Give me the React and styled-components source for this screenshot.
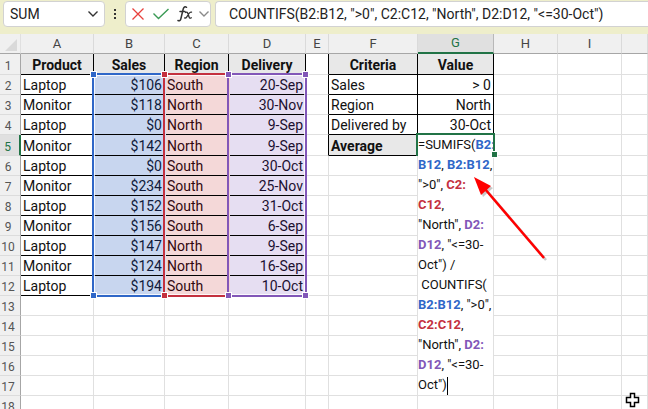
import React from "react";
import styled, { createGlobalStyle, css } from "styled-components";

const GlobalStyle = createGlobalStyle`
  *, *::before, *::after { box-sizing: border-box; }
  html, body { margin: 0; background: #fff; }
  body { font-family: Roboto, "Liberation Sans", sans-serif; font-size: 14px; color: #111; }
`;

const colors = {
  bar: "#eeeecb",
  head: "#f0f0f0",
  headActive: "#e0e0e0",
  line: "#e0e0e0",
  axis: "#a6a6a6",
  green: "#217346",
  blue: "#2f67c8",
  red: "#c4313f",
  purple: "#8257b8",
};

const fills = { blue: "#c8d6ef", red: "#f4d8d8", purple: "#e6def2" };
const inks = { blue: "#101c3c", red: "#32090f", purple: "#1c1030" };

const columnTracks = [21, 73, 71, 64, 77, 23, 89, 76, 64, 64];
const letters = ["A", "B", "C", "D", "E", "F", "G", "H", "I", ""];
const rowHeight = (n) => (n === 1 || n === 5 ? 21 : 20);
const rowNumbers = Array.from({ length: 18 }, (_, i) => i + 1);
const gridColumns = `${columnTracks.map((w) => `${w}px`).join(" ")} 1fr`;
const gridRows = `20px ${rowNumbers.map((n) => `${rowHeight(n)}px`).join(" ")}`;

const Page = styled.main`
  height: 100vh;
  overflow: hidden;
  display: flex;
  flex-direction: column;
`;

const Toolbar = styled.header`
  flex: none;
  display: flex;
  align-items: center;
  height: 34px;
  padding: 1px 0 7px 3px;
  background: ${colors.bar};
`;

const barBox = css`
  display: flex;
  align-items: center;
  height: 26px;
  background: #fff;
  border: 1px solid #d2d2d2;
  border-radius: 4px;
`;

const NameBox = styled.div`
  ${barBox}
  width: 102px;
  padding: 0 5px 0 6px;
`;

const BarInput = styled.input`
  flex: 1;
  min-width: 0;
  border: 0;
  padding: 0;
  outline: 0;
  background: transparent;
  font: inherit;
  color: #222;
`;

const IconButton = styled.button`
  display: flex;
  align-items: center;
  justify-content: center;
  border: 0;
  padding: 0;
  background: transparent;
  width: ${(p) => p.$width}px;
  height: 24px;
`;

const Grip = styled.svg`
  flex: none;
  width: 20px;
  height: 12px;
`;

const Actions = styled.div`
  ${barBox}
  width: 86px;
  justify-content: space-between;
  padding: 0 0 0 4px;
`;

const FormulaBox = styled.div`
  ${barBox}
  flex: 1;
  margin-left: 4px;
  padding-left: 13px;
  border-right: 0;
  border-radius: 4px 0 0 4px;
`;

const Sheet = styled.section`
  position: relative;
  flex: none;
`;

const Table = styled.table`
  width: 100%;
  table-layout: fixed;
  border-collapse: separate;
  border-spacing: 0;
`;

const Col = styled.col`
  width: ${(p) => (p.$width ? `${p.$width}px` : "auto")};
`;

const Row = styled.tr`
  height: ${(p) => p.$height}px;
`;

const Corner = styled.td`
  padding: 0;
  background: ${colors.head};
  border-right: 1px solid ${colors.line};
  border-bottom: 1px solid ${colors.axis};
  vertical-align: bottom;
`;

const CornerMark = styled.svg`
  display: block;
  margin: 0 0 2px 5px;
  width: 12px;
  height: 12px;
`;

const ColumnHead = styled.th`
  padding: 0;
  height: 20px;
  font-size: 13px;
  font-weight: 400;
  line-height: 18px;
  color: ${(p) => (p.$active ? colors.green : "#444")};
  background: ${(p) => (p.$active ? colors.headActive : colors.head)};
  border-right: 1px solid ${(p) => (p.$active ? "#b8b8b8" : "#dadada")};
  border-bottom: ${(p) => (p.$active ? `2px solid ${colors.green}` : `1px solid ${colors.axis}`)};
`;

const RowHead = styled.th`
  padding: 3px 4px 0 0;
  font-size: 12px;
  font-weight: 400;
  line-height: 16px;
  color: ${(p) => (p.$active ? colors.green : "#555")};
  background: ${(p) => (p.$active ? colors.headActive : colors.head)};
  border-bottom: 1px solid #dcdcdc;
  border-right: ${(p) => (p.$active ? `2px solid ${colors.green}` : `1px solid ${colors.axis}`)};
`;

const Cell = styled.td`
  padding: 2px 2px 0;
  line-height: 17px;
  white-space: nowrap;
  text-align: ${(p) => p.$align};
  font-weight: ${(p) => (p.$bold ? 700 : 400)};
  color: ${(p) => (p.$tint ? inks[p.$tint] : "#111")};
  background: ${(p) => (p.$tint ? fills[p.$tint] : p.$bold ? "#e8e8e8" : "#fff")};
  border-right: 1px solid ${(p) => (p.$rightInk ? "#000" : colors.line)};
  border-bottom: 1px solid ${(p) => (p.$bottomInk ? "#000" : colors.line)};
`;

const Overlay = styled.div`
  position: absolute;
  inset: 0;
  display: grid;
  grid-template-columns: ${gridColumns};
  grid-template-rows: ${gridRows};
  pointer-events: none;
`;

const Range = styled.div`
  position: relative;
  grid-column: ${(p) => p.$column};
  grid-row: 3 / 14;
  margin: -2px -1px -1px -2px;
  border: 2px solid ${(p) => colors[p.$tint]};
  box-shadow: inset 0 0 0 1px rgba(255, 255, 255, 0.8);
`;

const Handle = styled.span`
  position: absolute;
  ${(p) => p.$v}: -3px;
  ${(p) => p.$h}: -3px;
  width: 5px;
  height: 5px;
  background: ${(p) => colors[p.$tint]};
  box-shadow: 0 0 0 1px #fff;
`;

const ActiveCell = styled.div`
  position: relative;
  grid-column: 8;
  grid-row: 6;
  margin: -2px -1px 0 -2px;
  border: 2px solid ${colors.green};
  border-bottom: 0;
`;

const FillHandle = styled.span`
  position: absolute;
  right: -4px;
  bottom: -1px;
  width: 5px;
  height: 5px;
  background: ${colors.green};
  box-shadow: 0 0 0 1px #fff;
`;

const Editor = styled.div`
  grid-column: 8;
  grid-row: 6 / 19;
  align-self: start;
  margin-right: 1px;
  background: #fff;
  outline: 0;
  font-size: 13px;
  line-height: 20px;
  white-space: pre;
  pointer-events: auto;
`;

const Ref = styled.b`
  color: ${(p) => colors[p.$tint]};
`;

const Caret = styled.span`
  display: inline-block;
  width: 1px;
  height: 18px;
  vertical-align: middle;
  background: #000;
`;

const Arrow = styled.svg`
  position: absolute;
  left: 468px;
  top: 138px;
  width: 84px;
  height: 92px;
  pointer-events: none;
`;

const Pointer = styled.svg`
  position: absolute;
  left: 625px;
  top: 358px;
  width: 16px;
  height: 17px;
  pointer-events: none;
`;

const sales = [
  ["Laptop", "$106", "South", "20-Sep"],
  ["Monitor", "$118", "North", "30-Nov"],
  ["Laptop", "$0", "North", "9-Sep"],
  ["Monitor", "$142", "North", "9-Sep"],
  ["Laptop", "$0", "South", "30-Oct"],
  ["Monitor", "$234", "South", "25-Nov"],
  ["Laptop", "$152", "South", "31-Oct"],
  ["Monitor", "$156", "South", "6-Sep"],
  ["Laptop", "$147", "North", "9-Sep"],
  ["Monitor", "$124", "North", "16-Sep"],
  ["Laptop", "$194", "South", "10-Oct"],
];
const orders = [["Product", "Sales", "Region", "Delivery"], ...sales];
const criteria = [
  ["Criteria", "Value"],
  ["Sales", "> 0"],
  ["Region", "North"],
  ["Delivered by", "30-Oct"],
  ["Average", ""],
];
const tints = [null, "blue", "red", "purple"];

function cellProps(row, col) {
  const inOrders = row <= 12 && col <= 3;
  const inCriteria = row <= 5 && (col === 5 || col === 6);
  const text = inOrders ? orders[row - 1][col] : inCriteria ? criteria[row - 1][col - 5] : "";
  const right = col === 1 || col === 3 || col === 6;
  return {
    children: text,
    $align: row === 1 ? "center" : right ? "right" : "left",
    $bold: (row === 1 && (inOrders || inCriteria)) || (row === 5 && col === 5),
    $tint: inOrders && row > 1 ? tints[col] : null,
    $rightInk: inOrders || (row <= 5 && col >= 4 && col <= 6),
    $bottomInk: inOrders || inCriteria,
  };
}

const formula = [
  ["=SUMIFS(", ["blue", "B2:"]],
  [["blue", "B12"], ", ", ["blue", "B2:B12"], ","],
  ['">0", ', ["red", "C2:"]],
  [["red", "C12"], ","],
  ['"North", ', ["purple", "D2:"]],
  [["purple", "D12"], ', "<=30-'],
  ['Oct") /'],
  [" COUNTIFS("],
  [["blue", "B2:B12"], ', ">0",'],
  [["red", "C2:C12"], ","],
  ['"North", ', ["purple", "D2:"]],
  [["purple", "D12"], ', "<=30-'],
  ['Oct")'],
];

function RangeOutline({ tint, column }) {
  return (
    <Range $tint={tint} $column={column}>
      {["top", "bottom"].map((v) =>
        ["left", "right"].map((h) => <Handle key={v + h} $v={v} $h={h} $tint={tint} />)
      )}
    </Range>
  );
}

function Chevron({ color }) {
  return (
    <svg width="12" height="8" viewBox="0 0 12 8" fill="none" stroke={color} strokeWidth="1.4">
      <path d="M1.5 1.5 6 6l4.5-4.5" />
    </svg>
  );
}

function FormulaBar() {
  return (
    <Toolbar>
      <NameBox>
        <BarInput aria-label="Name box" defaultValue="SUM" />
        <IconButton $width={12} aria-label="Open name list">
          <Chevron color="#333" />
        </IconButton>
      </NameBox>
      <Grip viewBox="0 0 20 12" fill="#333" aria-hidden="true">
        <path d="M9 1h2v2H9zM9 5h2v2H9zM9 9h2v2H9z" />
      </Grip>
      <Actions>
        <IconButton $width={16} aria-label="Cancel">
          <svg width="14" height="14" viewBox="0 0 14 14" fill="none" stroke="#e8403c" strokeWidth="1.3">
            <path d="m1.5 1.5 11 11M12.5 1.5l-11 11" />
          </svg>
        </IconButton>
        <IconButton $width={24} aria-label="Enter">
          <svg width="18" height="12" viewBox="0 0 18 12" fill="none" stroke="#3a9a55" strokeWidth="1.4">
            <path d="m1.500 5.500 5 5 10-9.500" />
          </svg>
        </IconButton>
        <IconButton $width={18} aria-label="Insert function">
          <svg width="17" height="18" viewBox="0 0 17 18" fill="none" stroke="#333" strokeWidth="1.3" strokeLinecap="round">
            <path d="M9.500 2.300C8 1.200 6.800 2 6.200 4L3.800 14c-.4 1.700-1.500 2.300-2.800 1.500M3 6.500h5" strokeWidth="1.5" />
            <path d="M8.500 7.500c1.500-.8 2.100-.1 2.600 1.500l.9 2.700c.5 1.500 1.100 1.900 2.300 1.100M14.500 7.200c-1-.4-1.700.1-2.500 1.300l-2.200 3.300c-.7 1.100-1.300 1.500-2.200 1.100" />
          </svg>
        </IconButton>
        <IconButton $width={12} aria-label="More functions">
          <Chevron color="#8a8a8a" />
        </IconButton>
      </Actions>
      <FormulaBox>
        <BarInput
          aria-label="Formula bar"
          defaultValue={'COUNTIFS(B2:B12, ">0", C2:C12, "North", D2:D12, "<=30-Oct")'}
        />
      </FormulaBox>
    </Toolbar>
  );
}

export default function App() {
  return (
    <Page>
      <GlobalStyle />
      <FormulaBar />
      <Sheet>
        <Table>
          <colgroup>
            {columnTracks.map((w, i) => (
              <Col key={i} $width={w} />
            ))}
            <Col />
          </colgroup>
          <thead>
            <Row $height={20}>
              <Corner>
                <CornerMark viewBox="0 0 12 12" fill="#d9d9d9" aria-hidden="true">
                  <path d="M12 0v12H0z" />
                </CornerMark>
              </Corner>
              {letters.map((l, i) => (
                <ColumnHead key={i} scope="col" $active={l === "G"}>
                  {l}
                </ColumnHead>
              ))}
            </Row>
          </thead>
          <tbody>
            {rowNumbers.map((n) => (
              <Row key={n} $height={rowHeight(n)}>
                <RowHead scope="row" $active={n === 5}>
                  {n}
                </RowHead>
                {letters.map((_, c) => (
                  <Cell key={c} {...cellProps(n, c)} />
                ))}
              </Row>
            ))}
          </tbody>
        </Table>
        <Overlay>
          <RangeOutline tint="blue" column={3} />
          <RangeOutline tint="red" column={4} />
          <RangeOutline tint="purple" column={5} />
          <ActiveCell>
            <FillHandle />
          </ActiveCell>
          <Editor role="textbox" aria-label="Cell G5" aria-multiline="true" tabIndex={0}>
            {formula.map((line, i) => (
              <div key={i}>
                {line.map((part, j) =>
                  typeof part === "string" ? (
                    part
                  ) : (
                    <Ref key={j} $tint={part[0]}>
                      {part[1]}
                    </Ref>
                  )
                )}
                {i === formula.length - 1 && <Caret />}
              </div>
            ))}
          </Editor>
        </Overlay>
        <Arrow viewBox="0 0 84 92" aria-hidden="true">
          <g fill="#777" stroke="#777" opacity="0.4" transform="translate(2 2)">
            <path d="M17 17 76 86" strokeWidth="2.5" />
            <path d="M6 5 23 14 13 23z" stroke="none" />
          </g>
          <path d="M17 17 76 86" stroke="#f00" strokeWidth="2.5" />
          <path d="M6 5 23 14 13 23z" fill="#f00" />
        </Arrow>
        <Pointer viewBox="0 0 16 17" aria-hidden="true">
          <path
            d="M5.500 1.500h4v4h4v5h-4v4h-4v-4h-4v-5h4z"
            fill="#fff"
            stroke="#000"
            strokeWidth="1.5"
          />
        </Pointer>
      </Sheet>
    </Page>
  );
}
